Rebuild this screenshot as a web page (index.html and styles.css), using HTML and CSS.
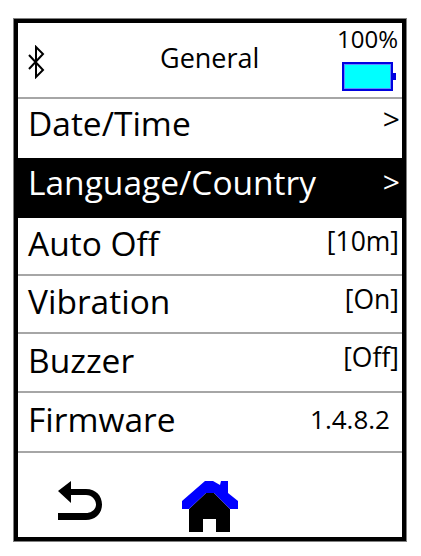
FILE: index.html
```html
<!DOCTYPE html>
<html lang="en">
<head>
    <meta charset="UTF-8">
    <title>General</title>
    <link rel="stylesheet" href="styles.css">
</head>
<body>
    <div class="device">
        <header class="top-bar">
            <svg class="bt-icon" width="18" height="34" viewBox="0 0 18 34">
                <path d="M2 10 L16 25 L9 32 L9 2 L16 9 L2 24" fill="none" stroke="#000" stroke-width="2"/>
            </svg>
            <h1 class="title">General</h1>
            <div class="battery-box">
                <span class="percent">100%</span>
                <div class="battery"><div class="battery-tip"></div></div>
            </div>
        </header>

        <div class="row row-date">
            <span class="label">Date/Time</span>
            <span class="value arrow">&gt;</span>
        </div>
        <div class="row row-selected">
            <span class="label">Language/Country</span>
            <span class="value arrow">&gt;</span>
        </div>
        <div class="row row-off">
            <span class="label">Auto Off</span>
            <span class="value">[10m]</span>
        </div>
        <div class="row row-vib">
            <span class="label">Vibration</span>
            <span class="value">[On]</span>
        </div>
        <div class="row row-buzz">
            <span class="label">Buzzer</span>
            <span class="value">[Off]</span>
        </div>
        <div class="row row-fw">
            <span class="label">Firmware</span>
            <span class="value version">1.4.8.2</span>
        </div>

        <footer class="bottom-bar">
            <svg class="back-icon" width="45" height="40" viewBox="0 0 45 40">
                <path d="M0 10 L13 0 L13 8 L28 8 C38 8 44 15 44 23.5 C44 32 38 39 28 39 L0 39 L0 32 L28 32 C34 32 38 28 38 23.5 C38 19 34 14 28 14 L13 14 L13 22 Z" fill="#000"/>
            </svg>
            <svg class="home-icon" width="56" height="52" viewBox="0 0 56 52">
                <path d="M7 28 L24 12 L32 12 L48 28 L48 51 L34 51 L34 38 L21 38 L21 51 L7 51 Z" fill="#000"/>
                <path d="M0 20 L23 0 L31 0 L38 4 L39 0 L46 0 L46 12 L56 20 L56 28 L48 28 L32 12 L24 12 L7 28 L0 28 Z" fill="#0000ff"/>
            </svg>
        </footer>
    </div>
</body>
</html>
```

FILE: styles.css
```css
body {
    margin: 0;
    padding: 18px 0 0 13px;
    font-family: "Open Sans", sans-serif;
    background-color: #fff;
    color: #000;
}

.device {
    box-sizing: border-box;
    width: 394px;
    height: 524px;
    border: 5px solid #000;
    outline: 1px solid #808080;
    outline-offset: -1px;
    display: flex;
    flex-direction: column;
}

.top-bar {
    height: 74px;
    flex: none;
    display: flex;
    align-items: flex-start;
}

.bt-icon {
    margin: 22px 0 0 9px;
}

.title {
    margin: 17px 0 0 115px;
    font-size: 27px;
    font-weight: 400;
    line-height: 36px;
}

.battery-box {
    margin-left: auto;
    margin-right: 4px;
    display: flex;
    flex-direction: column;
    align-items: flex-end;
}

.percent {
    font-size: 24px;
    line-height: 32px;
}

.battery {
    width: 51px;
    height: 29px;
    box-sizing: border-box;
    border: 2px solid #0000e0;
    box-shadow: inset 0 0 0 1px #5a8cff;
    background-color: #00ffff;
    margin: 7px 5px 0 0;
    position: relative;
}

.battery-tip {
    position: absolute;
    right: -5px;
    top: 9px;
    width: 3px;
    height: 7px;
    background-color: #0000e0;
}

.row {
    flex: none;
    box-sizing: border-box;
    display: flex;
    justify-content: space-between;
    align-items: flex-start;
    border-top: 2px solid #a6a6a6;
    padding: 0 3px 0 10px;
}

.row-date { height: 61px; }
.row-selected { height: 60px; background-color: #000; color: #fff; border-top: none; }
.row-off { height: 56px; border-top: none; }
.row-vib { height: 58px; }
.row-buzz { height: 59px; }
.row-fw { height: 60px; }

.label {
    font-size: 33.5px;
    line-height: 50px;
}

.row-date .label,
.row-selected .label {
    margin-top: -1px;
}

.row-buzz .label,
.row-fw .label {
    margin-top: 1px;
}

.value {
    font-size: 26.5px;
    line-height: 34px;
    margin-top: 6px;
}

.row .arrow {
    font-size: 30px;
    margin-top: 3px;
    margin-right: -1px;
}

.row-selected .arrow {
    margin-top: 7px;
}

.row .version {
    font-size: 26px;
    margin: 9px 9px 0 0;
}

.bottom-bar {
    flex: 1;
    border-top: 2px solid #a6a6a6;
    display: flex;
    align-items: flex-start;
}

.back-icon {
    margin: 28px 0 0 40px;
}

.home-icon {
    margin: 28px 0 0 79px;
}
```
